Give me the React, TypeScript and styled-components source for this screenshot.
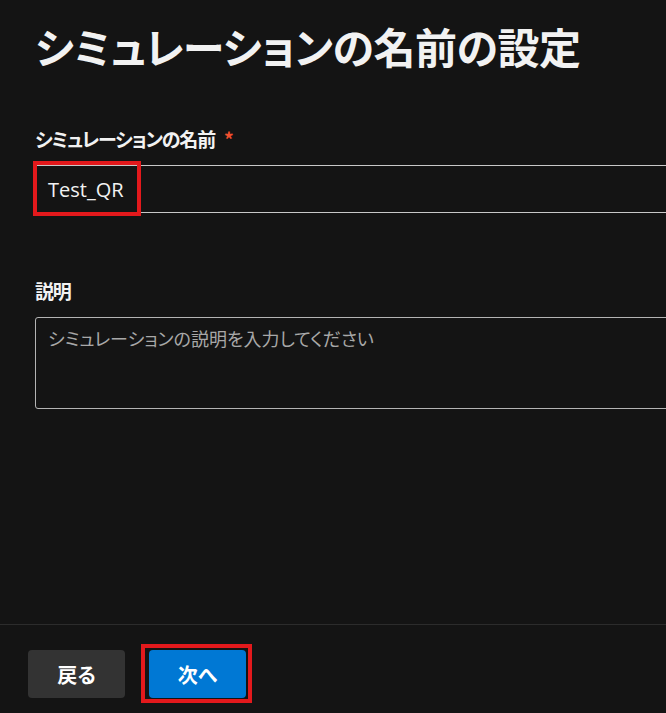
import React from "react";
import styled, { createGlobalStyle } from "styled-components";

const GlobalStyle = createGlobalStyle`
  html, body {
    margin: 0;
    padding: 0;
    background: #141414;
    overflow: hidden;
  }
  body {
    font-family: "Noto Sans CJK JP", "Noto Sans", sans-serif;
    font-feature-settings: "palt";
    color: #f0f0f0;
  }
`;

const Page = styled.div`
  display: flex;
  flex-direction: column;
  width: 666px;
  height: 713px;
  overflow: hidden;
`;

const Content = styled.div`
  flex: 1;
  display: flex;
  flex-direction: column;
  padding-left: 35px;
`;

const Title = styled.h1`
  margin: 16px 0 0;
  font-size: 42px;
  line-height: 60px;
  letter-spacing: -0.5px;
  font-weight: 700;
  white-space: nowrap;
  color: #f2f2f2;
`;

const Field = styled.div<{ $top: number }>`
  display: flex;
  flex-direction: column;
  gap: 12px;
  margin-top: ${(p) => p.$top}px;
`;

const Label = styled.label`
  font-size: 19px;
  line-height: 28px;
  letter-spacing: -1.2px;
  font-weight: 700;
  color: #f2f2f2;
`;

const Required = styled.span`
  color: #f1502f;
  margin-left: 9px;
`;

const Marked = styled.div`
  position: relative;
  display: flex;
`;

const Highlight = styled.span<{ $inset: string }>`
  position: absolute;
  box-sizing: border-box;
  inset: ${(p) => p.$inset};
  border: 4px solid #e3191c;
  pointer-events: none;
`;

const TextBox = styled.div`
  box-sizing: border-box;
  flex-shrink: 0;
  width: 700px;
  height: 48px;
  border: 1px solid #c8c8c8;
  border-radius: 2px;
  padding: 0 12px;
  display: flex;
  align-items: center;
  font-family: "Open Sans", "Noto Sans CJK JP", sans-serif;
  font-size: 20px;
  color: #f2f2f2;
`;

const TextArea = styled.div`
  box-sizing: border-box;
  width: 700px;
  height: 92px;
  border: 1px solid #b4b4b4;
  border-radius: 3px;
  padding: 6px 12px;
  font-size: 18px;
  line-height: 28px;
  color: #a8a8a8;
`;

const Footer = styled.div`
  display: flex;
  gap: 24px;
  padding: 25px 28px 15px;
  border-top: 1px solid #2c2c2c;
`;

const Button = styled.button<{ $primary?: boolean }>`
  height: 48px;
  min-width: 97px;
  padding: 0 28px;
  border: none;
  border-radius: 4px;
  font-family: "Noto Sans CJK JP", sans-serif;
  font-feature-settings: "palt";
  font-size: 20px;
  font-weight: 700;
  color: #ffffff;
  background: ${(p) => (p.$primary ? "#0078d4" : "#333333")};
`;

export default function App() {
  return (
    <Page>
      <GlobalStyle />
      <Content>
        <Title>シミュレーションの名前の設定</Title>
        <Field $top={49}>
          <Label>
            シミュレーションの名前<Required>*</Required>
          </Label>
          <Marked>
            <TextBox>Test_QR</TextBox>
            <Highlight $inset="-4px auto -3px -2px" style={{ width: 108 }} />
          </Marked>
        </Field>
        <Field $top={64}>
          <Label>説明</Label>
          <TextArea>シミュレーションの説明を入力してください</TextArea>
        </Field>
      </Content>
      <Footer>
        <Button>戻る</Button>
        <Marked>
          <Button $primary>次へ</Button>
          <Highlight $inset="-6px -6px -5px -8px" />
        </Marked>
      </Footer>
    </Page>
  );
}
